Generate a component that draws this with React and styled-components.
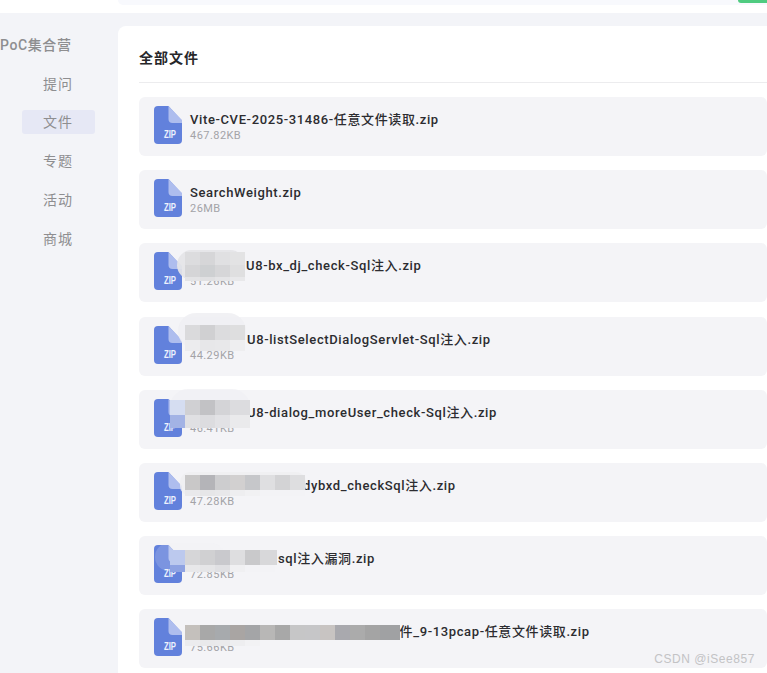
import React from "react";
import styled, { createGlobalStyle } from "styled-components";

const Global = createGlobalStyle`
  html, body { margin: 0; padding: 0; background: #fff; overflow: hidden; }
  body { width: 767px; height: 673px; font-family: Roboto, "Noto Sans CJK SC", sans-serif; }
  * { box-sizing: border-box; }
`;

const Page = styled.div`
  width: 767px; height: 673px; overflow: hidden; position: relative; display: flex; flex-direction: column;
`;
const TopBar = styled.div`
  height: 13px; flex: none; background: #fff; padding-left: 118px;
`;
const TopPanel = styled.div`
  height: 5px; background: #f8f9fd; border-bottom-left-radius: 8px; display: flex; justify-content: flex-end;
`;
const GreenPill = styled.div`
  width: 29px; height: 3px; background: #4fcb80; border-bottom-left-radius: 4px;
`;
const Body = styled.div`
  flex: 1; display: flex; background: #f3f4f8; min-height: 0;
`;
const Sidebar = styled.aside`
  width: 118px; flex: none; padding-top: 20px; display: flex; flex-direction: column;
`;
const Brand = styled.div`
  font-size: 14px; line-height: 24px; font-weight: 500; color: #8e8e90; letter-spacing: .6px; margin-bottom: 14.6px; white-space: nowrap;
`;
const Nav = styled.nav`
  display: flex; flex-direction: column; gap: 14.75px; padding-left: 22px;
`;
const NavItem = styled.div`
  width: 73px; height: 24px; line-height: 25px; padding-left: 21px; font-size: 14px; letter-spacing: 1px;
  color: #8e8e90; border-radius: 3px; background: ${p => (p.$active ? "#e6e8f5" : "transparent")};
`;
const Main = styled.main`
  flex: 1; margin-top: 13px; background: #fff; border-top-left-radius: 8px; padding: 0 0 0 21px; min-width: 0;
`;
const Title = styled.h2`
  margin: 0; height: 57px; line-height: 64px; font-size: 14px; font-weight: 700; color: #27272a; letter-spacing: 1px;
  border-bottom: 1px solid #ececee;
`;
const List = styled.div`
  display: flex; flex-direction: column; gap: 14.2px; padding-top: 14px;
`;
const Row = styled.div`
  position: relative; height: 59px; flex: none; background: #f4f4f7; border-radius: 6px; display: flex; align-items: flex-start; padding: 9px 0 0 15px; gap: 8px;
`;
const Info = styled.div`
  display: flex; flex-direction: column; padding-top: 5px;
`;
const Name = styled.div`
  font-size: 13px; line-height: 17px; font-weight: 500; color: #2c2c30; letter-spacing: .62px; white-space: nowrap; display: flex;
`;
const Redacted = styled.span`
  display: block; flex: none; width: ${p => p.$w}px;
`;
const Size = styled.div`
  font-size: 11px; line-height: 15px; color: #a3a3a7; letter-spacing: .45px;
`;
const Blob = styled.div`
  position: absolute; left: ${p => p.$x}px; top: ${p => p.$y}px; width: ${p => p.$w}px; height: ${p => p.$h}px;
  background: ${p => p.$c}; border-radius: ${p => p.$r}px;
`;
const Mosaic = styled.div`
  position: absolute; left: ${p => p.$x}px; top: ${p => p.$y}px; display: flex; flex-direction: column;
`;
const MosaicRow = styled.div`
  display: flex; height: ${p => p.$h}px;
`;
const Cell = styled.span`
  width: ${p => p.$w || 15}px; height: 100%; flex: none; background: ${p => p.$c};
`;
const Watermark = styled.div`
  position: absolute; right: 12px; bottom: 6px; font-size: 12px; line-height: 16px; color: #c3c3c5; letter-spacing: .55px;
  font-family: "Liberation Sans", sans-serif;
`;

const ZipIcon = () => (
  <svg width="28" height="38" viewBox="0 0 28 38" style={{ flex: "none" }}>
    <path d="M4 0H14.5L28 15V34a4 4 0 0 1-4 4H4a4 4 0 0 1-4-4V4a4 4 0 0 1 4-4Z" fill="#6281dc" />
    <path d="M14.5 0L28 14V17H18.5a4 4 0 0 1-4-4Z" fill="#aebdee" />
    <text x="16" y="32" textAnchor="middle" fontSize="10" fontWeight="700" fontFamily="Liberation Sans, sans-serif" fill="#eef2fd" textLength="12" lengthAdjust="spacingAndGlyphs">ZIP</text>
  </svg>
);

const files = [
  { name: "Vite-CVE-2025-31486-任意文件读取.zip", size: "467.82KB" },
  { name: "SearchWeight.zip", size: "26MB" },
  {
    hw: 56, name: "U8-bx_dj_check-Sql注入.zip", size: "51.26KB",
    blobs: [[38, 7, 68, 30, "rgba(228,228,231,.93)", 15]],
    mosaic: { x: 46, y: 9, rows: [[13, ["#dcdcde", "#d6d6d8", "#e0e0e2", "#e3e3e4"]], [12, ["#d5d5d7", "#ced0d2", "#d6d6d8", "#dfdfe0"]], [4, ["#e3e3e5", "#e0e0e2", "#e4e4e6", "#e8e8ea"]]] },
  },
  {
    hw: 57, name: "U8-listSelectDialogServlet-Sql注入.zip", size: "44.29KB",
    blobs: [[39, -4, 68, 36, "rgba(240,240,243,.9)", 18]],
    mosaic: { x: 46, y: 8, rows: [[15, ["#dadadc", "#d0d0d2", "#dcdcde", "#dededf"]], [11, ["#ececee", "#e7e7e9", "#e8e8ea", "#eeeef0"]]] },
  },
  {
    hw: 57, name: "U8-dialog_moreUser_check-Sql注入.zip", size: "46.41KB",
    blobs: [[31, -1, 80, 38, "rgba(240,240,244,.75)", 18]],
    mosaic: { x: 31, y: 10, rows: [[15, ["#d5ddf1", "#d0d0d3", "#c2c2c5", "#d4d4d7", "#dcdcdf", ["#dcdcdf", 5]]], [13, ["#a3b3e5", "#e0e0e3", "#dcdcdf", "#e2e2e5", "#eaeaec", ["#eaeaec", 5]]]] },
  },
  {
    hw: 113, name: "dybxd_checkSql注入.zip", size: "47.28KB",
    blobs: [[41, 9, 126, 24, "rgba(238,238,241,.85)", 10]],
    mosaic: { x: 46, y: 12, rows: [[15, ["#c9c8c8", "#b4b4b8", "#cdcdcf", "#d2d0d0", "#c6c7ca", "#dfdfe1", "#d3d3d5", "#dedee0"]], [6, ["#e9e9eb", "#e6e6e8", "#e8e8ea", "#eeeef0", "#f1f1f3", "#f3f3f6", "#f3f3f6", "#f3f3f6"]]] },
  },
  {
    hw: 88, name: "sql注入漏洞.zip", size: "72.85KB",
    blobs: [[16, 7, 70, 28, "rgba(238,238,243,.18)", 14]],
    mosaic: { x: 31, y: 14, rows: [[15, ["#bcc9ee", "#d6d6d8", "#d0d0d2", "#c9c9cd", "#dedee0", "#c9c9cb", "#d8d8da", ["#d8d8da", 2]]], [7, ["#8ea2e2", "#e8e8ea", "#e5e5e7", "#e0e0e3", "#f0f0f2", "#f3f3f6", "#f3f3f6"]]] },
  },
  {
    hw: 196, name: "文件_9-13pcap-任意文件读取.zip", size: "75.66KB",
    mosaic: { x: 46, y: 16, rows: [[15, ["#c4c0bc", "#a8a8a8", "#a7aaad", "#a9a5a3", "#a4a5a7", "#b8b7b6", "#a8a8a8", "#c6c6c7", "#c6c6c8", "#c8c4c2", "#a9a9ae", "#ababab", "#a4a4a4", "#a0a1a3", ["#a0a1a3", 5]]], [6, ["#ececee", "#e9e9eb", "#eaeaec", "#eeeef0", "#f2f2f4"]]] },
  },
];

export default function App() {
  return (
    <Page>
      <Global />
      <TopBar><TopPanel><GreenPill /></TopPanel></TopBar>
      <Body>
        <Sidebar>
          <Brand>PoC集合营</Brand>
          <Nav>
            {["提问", "文件", "专题", "活动", "商城"].map(n => (
              <NavItem key={n} $active={n === "文件"}>{n}</NavItem>
            ))}
          </Nav>
        </Sidebar>
        <Main>
          <Title>全部文件</Title>
          <List>
            {files.map(f => (
              <Row key={f.name}>
                <ZipIcon />
                <Info>
                  <Name>
                    {f.hw && <Redacted $w={f.hw} />}
                    {f.name}
                  </Name>
                  <Size>{f.size}</Size>
                </Info>
                {f.blobs && f.blobs.map((b, i) => (
                  <Blob key={i} $x={b[0]} $y={b[1]} $w={b[2]} $h={b[3]} $c={b[4]} $r={b[5]} />
                ))}
                {f.mosaic && (
                  <Mosaic $x={f.mosaic.x} $y={f.mosaic.y}>
                    {f.mosaic.rows.map(([h, cells], i) => (
                      <MosaicRow key={i} $h={h}>
                        {cells.map((c, j) => Array.isArray(c)
                          ? <Cell key={j} $c={c[0]} $w={c[1]} />
                          : <Cell key={j} $c={c} />)}
                      </MosaicRow>
                    ))}
                  </Mosaic>
                )}
              </Row>
            ))}
          </List>
        </Main>
      </Body>
      <Watermark>CSDN @iSee857</Watermark>
    </Page>
  );
}
